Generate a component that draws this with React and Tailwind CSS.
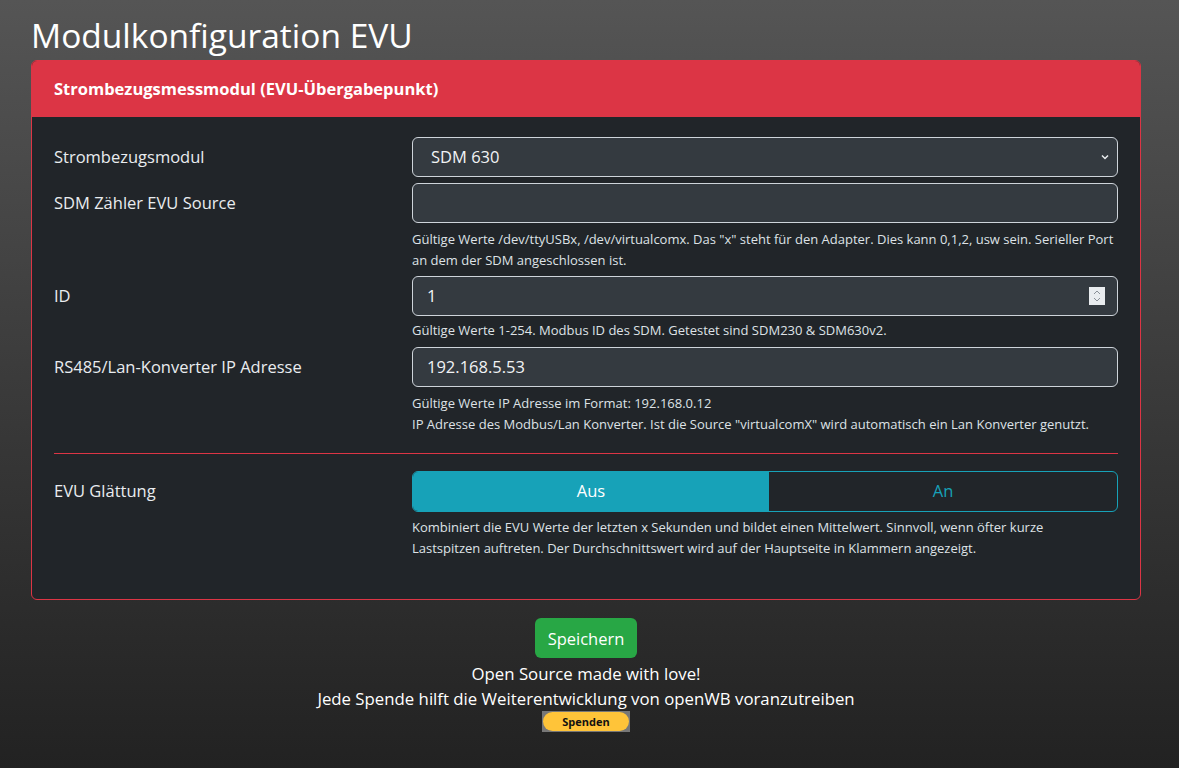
import React from 'react';

const font = { fontFamily: '"Segoe UI", "Open Sans", "Noto Sans", sans-serif' };

const Row = ({ label, children, help, className = '', helpGap = 'mt-[6px]' }) => (
  <div className={`flex ${className}`}>
    <div className="w-[358px] shrink-0 pt-[8px] text-[16.5px] leading-[24px] text-[#e9ecef]">{label}</div>
    <div className="flex-1">
      {children}
      {help && <div className={`${helpGap} text-[13px] leading-[21px] text-[#dee2e6]`}>{help}</div>}
    </div>
  </div>
);

const Field = ({ value, spinner }) => (
  <div className="flex h-[40px] items-center justify-between rounded-[6px] border border-[#ced4da] bg-[#343a40] pr-[12px] pl-[14px] text-[16.5px] text-[#f1f3f5]">
    <span>{value}</span>
    {spinner && (
      <svg width="16" height="18" viewBox="0 0 16 18">
        <rect width="16" height="18" fill="#e9ecef" />
        <path d="M5 7l3-3 3 3M5 11l3 3 3-3" fill="none" stroke="#8a9097" strokeWidth="1" />
      </svg>
    )}
  </div>
);

const App = () => {
  return (
    <div
      className="min-h-[768px] bg-gradient-to-b from-[#555555] to-[#222222] pt-[12px] pr-[38px] pb-[30px] pl-[31px] text-white"
      style={font}
    >
      <h1 className="text-[33.5px] leading-[46px]">Modulkonfiguration EVU</h1>

      <div className="mt-[2px] overflow-hidden rounded-[6px] border border-[#dc3545] bg-[#212529]">
        <div className="flex h-[56px] items-center bg-[#dc3545] px-[22px] text-[16.5px] font-bold text-white">
          Strombezugsmessmodul (EVU-Übergabepunkt)
        </div>

        <div className="px-[22px] pt-[20px] pb-[40px]">
          <Row label="Strombezugsmodul">
            <div className="flex h-[40px] items-center justify-between rounded-[6px] border border-[#ced4da] bg-[#343a40] pr-[6px] pl-[18px] text-[16.5px] text-[#f1f3f5]">
              <span>SDM 630</span>
              <svg width="12" height="12" viewBox="0 0 16 16" fill="none" stroke="#e9ecef" strokeWidth="2">
                <path d="M4 6l4 4 4-4" />
              </svg>
            </div>
          </Row>

          <Row
            className="mt-[6px]"
            label="SDM Zähler EVU Source"
            help='Gültige Werte /dev/ttyUSBx, /dev/virtualcomx. Das "x" steht für den Adapter. Dies kann 0,1,2, usw sein. Serieller Port an dem der SDM angeschlossen ist.'
          >
            <Field value="" />
          </Row>

          <Row
            className="mt-[5px]"
            helpGap="mt-[4px]"
            label="ID"
            help="Gültige Werte 1-254. Modbus ID des SDM. Getestet sind SDM230 & SDM630v2."
          >
            <Field value="1" spinner />
          </Row>

          <Row
            className="mt-[6px]"
            label="RS485/Lan-Konverter IP Adresse"
            help={
              <>
                <div>Gültige Werte IP Adresse im Format: 192.168.0.12</div>
                <div>IP Adresse des Modbus/Lan Konverter. Ist die Source "virtualcomX" wird automatisch ein Lan Konverter genutzt.</div>
              </>
            }
          >
            <Field value="192.168.5.53" />
          </Row>

          <div className="mt-[18px] mb-[17px] h-[1px] w-full bg-[#dc3545]"></div>

          <Row
            helpGap="mt-[5px]"
            label="EVU Glättung"
            help={
              <>
                Kombiniert die EVU Werte der letzten x Sekunden und bildet einen Mittelwert. Sinnvoll, wenn öfter kurze
                <br />
                Lastspitzen auftreten. Der Durchschnittswert wird auf der Hauptseite in Klammern angezeigt.
              </>
            }
          >
            <div className="flex h-[41px] overflow-hidden rounded-[6px] border border-[#17a2b8] text-[16.5px]">
              <div className="flex w-[356px] items-center justify-center bg-[#17a2b8] text-white">Aus</div>
              <div className="flex flex-1 items-center justify-center text-[#17a2b8]">An</div>
            </div>
          </Row>
        </div>
      </div>

      <div className="mt-[18px] flex flex-col items-center text-[16.8px] leading-[25px] text-white">
        <button className="h-[40px] rounded-[6px] bg-[#28a745] px-[13px] text-[16.5px] text-white">Speichern</button>
        <div className="mt-[3px]">Open Source made with love!</div>
        <div>Jede Spende hilft die Weiterentwicklung von openWB voranzutreiben</div>
        <div className="bg-[#777777] p-px">
          <div className="flex h-[19px] w-[86px] items-center justify-center rounded-full bg-[#ffc439] text-[11px] font-bold text-[#111111]">
            Spenden
          </div>
        </div>
      </div>
    </div>
  );
};

export default App;
